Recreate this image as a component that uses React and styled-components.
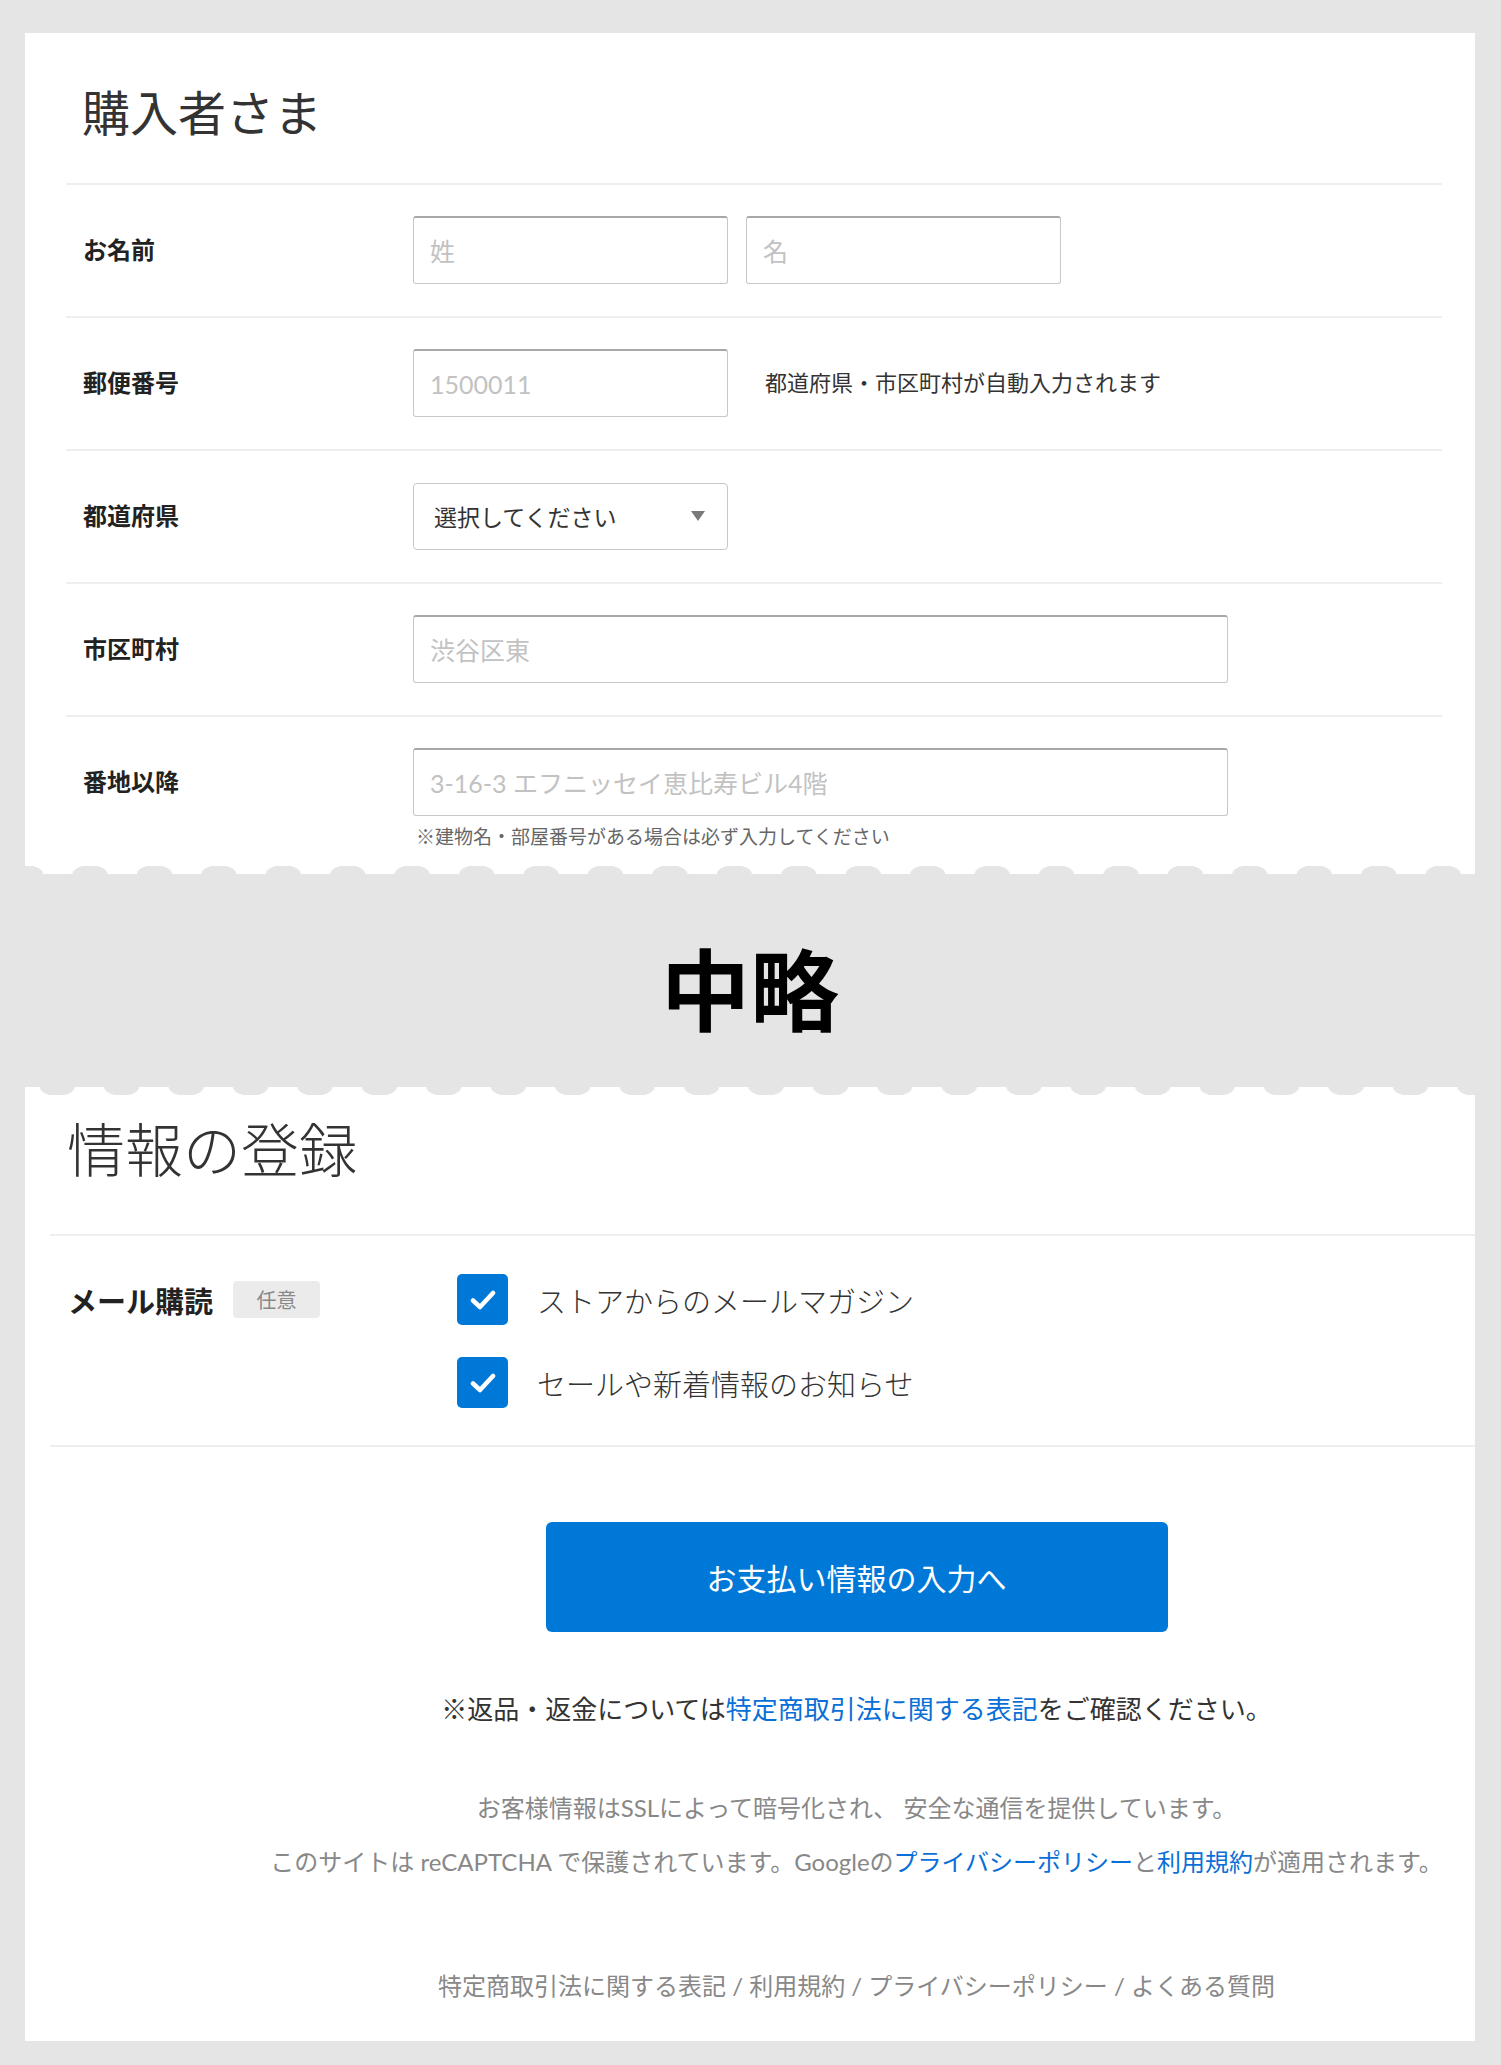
import React from 'react';
import styled, { createGlobalStyle } from 'styled-components';

const GlobalStyle = createGlobalStyle`
  html, body {
    margin: 0;
    padding: 0;
    background: #e5e5e5;
  }
  body {
    font-family: Lato, "Noto Sans CJK JP", sans-serif;
    color: #333;
  }
  * {
    box-sizing: border-box;
  }
`;

const Page = styled.div`
  width: 1501px;
  padding: 33px 26px 25px 25px;
`;

const Card = styled.section`
  background: #fff;
  padding: ${p => p.$pad};
`;

const Scallop = styled.div`
  height: 8px;
  background-color: #fff;
  background-image: radial-gradient(
    ellipse 18px 9px at 50% ${p => (p.$down ? '0%' : '100%')},
    #e5e5e5 94%,
    rgba(229, 229, 229, 0) 100%
  );
  background-size: 64.45px 8px;
  background-repeat: repeat-x;
  background-position: ${p => p.$offset} 0;
`;

const Omitted = styled.div`
  height: 213px;
  display: flex;
  align-items: center;
  justify-content: center;
  padding-top: 10px;
  font-family: "Noto Sans CJK JP", sans-serif;
  font-size: 89px;
  font-weight: 700;
  color: #000;
`;

const Heading = styled.h2`
  margin: 0;
  font-size: ${p => p.$size}px;
  line-height: ${p => p.$size}px;
  font-weight: ${p => p.$weight || 400};
  color: #333;
  padding: ${p => p.$pad};
`;

const Row = styled.div`
  display: grid;
  grid-template-columns: 347px 1fr;
  border-top: 2px solid #eee;
  padding: 31px 0 ${p => (p.$last ? '16px' : '32px')};
`;

const Label = styled.div`
  padding-left: 17px;
  line-height: 68px;
  font-size: 24px;
  font-weight: 700;
  color: #222;
`;

const Field = styled.div`
  display: flex;
  align-items: center;
  gap: ${p => p.$gap || 18}px;
`;

const FieldStack = styled.div`
  display: flex;
  flex-direction: column;
`;

const TextInput = styled.input`
  width: ${p => p.$w}px;
  height: 68px;
  border: 1px solid #c8c8c8;
  border-top: 2px solid #a8a8a8;
  border-radius: 3px;
  padding: 0 16px;
  font-family: Lato, "Noto Sans CJK JP", sans-serif;
  font-size: 25px;
  color: #333;
  background: #fff;
  outline: none;
  &::placeholder {
    color: #c2c2c2;
  }
`;

const Hint = styled.span`
  font-size: ${p => p.$size || 22}px;
  color: ${p => p.$color || '#333'};
  line-height: 26px;
  margin-top: ${p => p.$mt || 0}px;
  padding-left: ${p => p.$pl || 0}px;
`;

const SelectBox = styled.div`
  width: 315px;
  height: 67px;
  border: 1px solid #c8c8c8;
  border-radius: 4px;
  display: flex;
  align-items: center;
  justify-content: space-between;
  padding: 0 22px 0 20px;
  font-size: 23px;
  color: #333;
`;

const Caret = styled.span`
  width: 0;
  height: 0;
  border-left: 7px solid transparent;
  border-right: 7px solid transparent;
  border-top: 10px solid #7a7a7a;
`;

const MailRow = styled.div`
  display: grid;
  grid-template-columns: 407px 1fr;
  border-top: 2px solid #eee;
  border-bottom: 2px solid #eee;
  padding: 38px 0 37px;
`;

const MailLabel = styled.div`
  padding-left: 18px;
  height: 51px;
  display: flex;
  align-items: center;
  gap: 20px;
  font-size: 29px;
  font-weight: 700;
  color: #222;
`;

const Badge = styled.span`
  width: 87px;
  height: 37px;
  border-radius: 4px;
  background: #ebebeb;
  color: #888;
  font-size: 20px;
  font-weight: 400;
  display: flex;
  align-items: center;
  justify-content: center;
`;

const CheckList = styled.div`
  display: flex;
  flex-direction: column;
  gap: 32px;
`;

const CheckItem = styled.label`
  display: flex;
  align-items: center;
  gap: 29px;
  height: 51px;
  font-size: 29px;
  font-weight: 300;
  color: #333;
`;

const Box = styled.span`
  width: 51px;
  height: 51px;
  border-radius: 5px;
  background: #0078d7;
  display: flex;
  align-items: center;
  justify-content: center;
`;

const Actions = styled.div`
  padding: 75px 0 35px 188px;
  display: flex;
  flex-direction: column;
  align-items: center;
`;

const PrimaryButton = styled.button`
  width: 622px;
  height: 110px;
  border: none;
  border-radius: 6px;
  background: #0078d7;
  color: #fff;
  font-family: Lato, "Noto Sans CJK JP", sans-serif;
  font-size: 30px;
  font-weight: 400;
`;

const Line = styled.p`
  margin: ${p => p.$mt}px 0 0;
  font-size: ${p => p.$size}px;
  line-height: 40px;
  color: ${p => p.$color};
  white-space: nowrap;
`;

const Link = styled.a`
  color: #0a6fd6;
  text-decoration: none;
`;

function Check() {
  return (
    <svg width="26" height="22" viewBox="0 0 26 22">
      <path d="M3 11.5 L10 18 L23 4" fill="none" stroke="#fff" strokeWidth="4.5" strokeLinecap="round" strokeLinejoin="round" />
    </svg>
  );
}

function BuyerCard() {
  return (
    <Card $pad="0 33px 0 41px">
      <Heading $size={48} $pad="56px 0 46px 16px">購入者さま</Heading>
      <Row>
        <Label>お名前</Label>
        <Field>
          <TextInput $w={315} placeholder="姓" />
          <TextInput $w={315} placeholder="名" />
        </Field>
      </Row>
      <Row>
        <Label>郵便番号</Label>
        <Field $gap={37}>
          <TextInput $w={315} placeholder="1500011" />
          <Hint>都道府県・市区町村が自動入力されます</Hint>
        </Field>
      </Row>
      <Row>
        <Label>都道府県</Label>
        <Field>
          <SelectBox>
            選択してください
            <Caret />
          </SelectBox>
        </Field>
      </Row>
      <Row>
        <Label>市区町村</Label>
        <Field>
          <TextInput $w={815} placeholder="渋谷区東" />
        </Field>
      </Row>
      <Row $last>
        <Label>番地以降</Label>
        <FieldStack>
          <TextInput $w={815} placeholder="3-16-3 エフニッセイ恵比寿ビル4階" />
          <Hint $size={19} $color="#666" $mt={8} $pl={3}>※建物名・部屋番号がある場合は必ず入力してください</Hint>
        </FieldStack>
      </Row>
    </Card>
  );
}

function RegisterCard() {
  return (
    <Card $pad="0 0 0 25px">
      <Heading $size={58} $weight={300} $pad="26px 0 55px 17px">情報の登録</Heading>
      <MailRow>
        <MailLabel>
          メール購読
          <Badge>任意</Badge>
        </MailLabel>
        <CheckList>
          <CheckItem>
            <Box><Check /></Box>
            ストアからのメールマガジン
          </CheckItem>
          <CheckItem>
            <Box><Check /></Box>
            セールや新着情報のお知らせ
          </CheckItem>
        </CheckList>
      </MailRow>
      <Actions>
        <PrimaryButton>お支払い情報の入力へ</PrimaryButton>
        <Line $mt={57} $size={26} $color="#333">
          ※返品・返金については<Link href="#">特定商取引法に関する表記</Link>をご確認ください。
        </Line>
        <Line $mt={59} $size={24} $color="#888">
          お客様情報はSSLによって暗号化され、 安全な通信を提供しています。
        </Line>
        <Line $mt={14} $size={24} $color="#888">
          このサイトは reCAPTCHA で保護されています。Googleの<Link href="#">プライバシーポリシー</Link>と<Link href="#">利用規約</Link>が適用されます。
        </Line>
        <Line $mt={84} $size={24} $color="#888">
          特定商取引法に関する表記 / 利用規約 / プライバシーポリシー / よくある質問
        </Line>
      </Actions>
    </Card>
  );
}

export default function App() {
  return (
    <>
      <GlobalStyle />
      <Page>
        <BuyerCard />
        <Scallop $offset="-31.7px" />
        <Omitted>中略</Omitted>
        <Scallop $down $offset="0px" />
        <RegisterCard />
      </Page>
    </>
  );
}
